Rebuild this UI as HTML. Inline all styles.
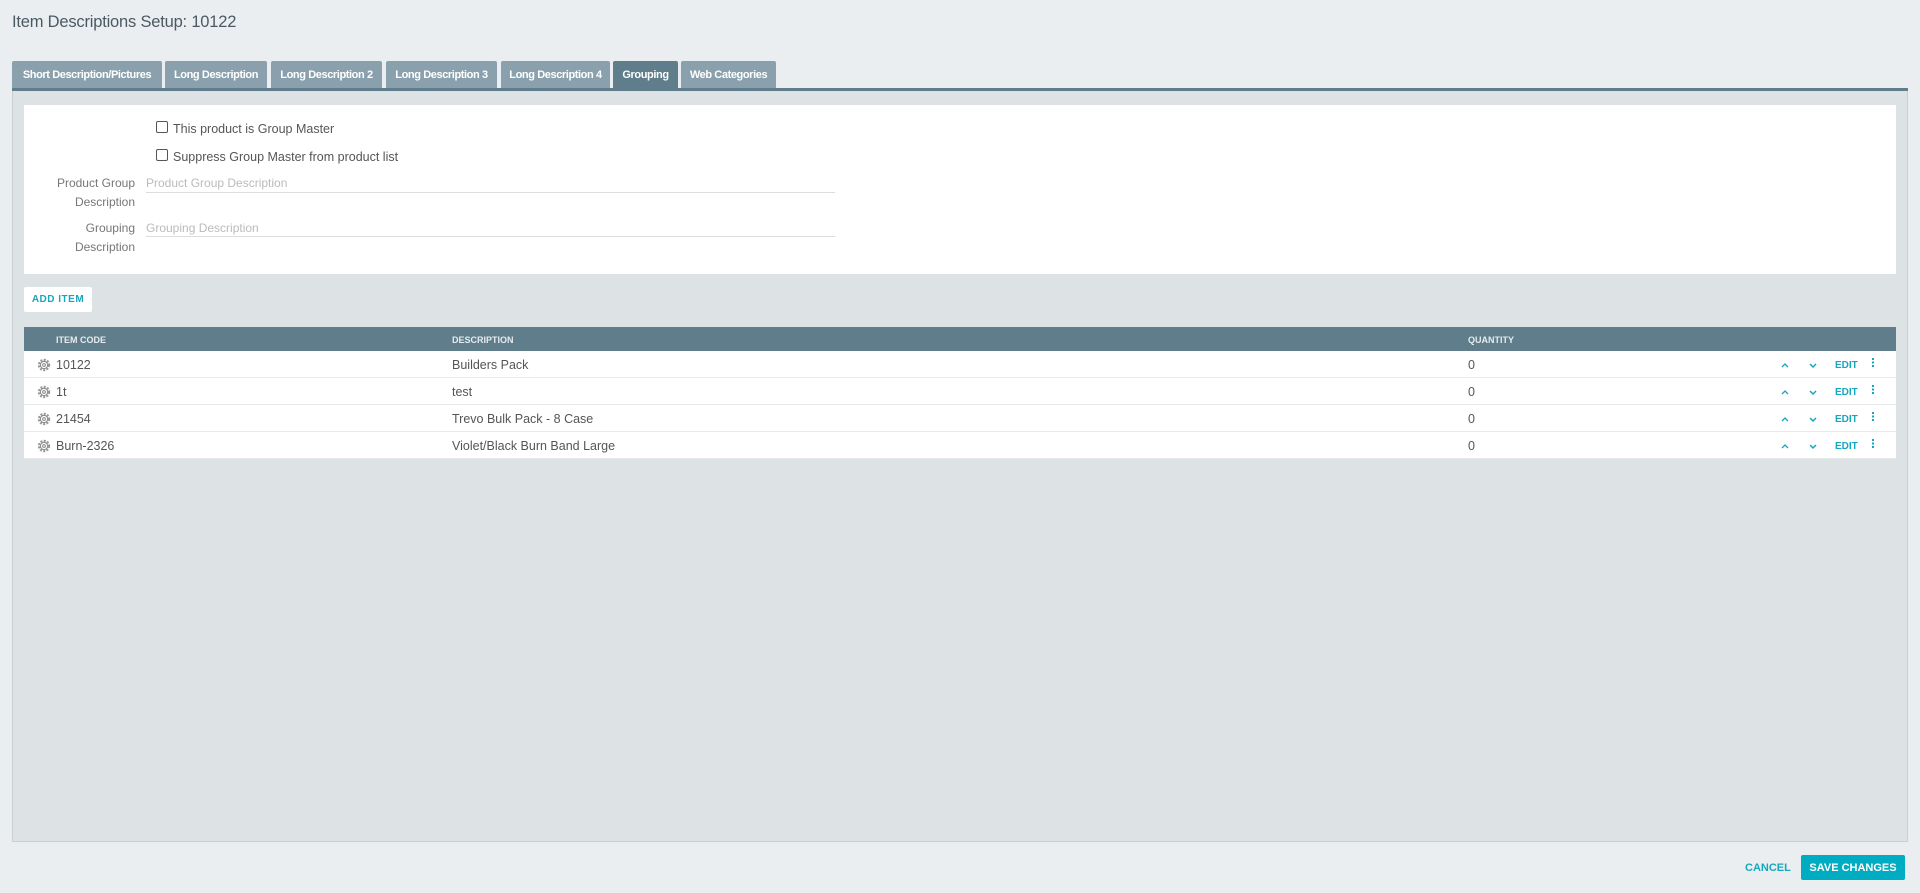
<!DOCTYPE html>
<html><head><meta charset="utf-8"><style>
*{box-sizing:border-box;margin:0;padding:0}
body{width:1920px;height:893px;background:#ebeef1;font-family:"Liberation Sans",sans-serif;color:#555;position:relative;overflow:hidden}
.abs{position:absolute}
h1{position:absolute;left:12px;top:13px;font-size:16.5px;font-weight:normal;color:#4a5a63;letter-spacing:-0.2px}
.tab{position:absolute;top:61px;height:27px;background:#8aa1ad;color:#fff;font-size:11px;font-weight:bold;line-height:28px;text-align:center;letter-spacing:-0.4px;border-radius:2px 2px 0 0}
.tab.act{background:#5f7d8a}
.tabline{left:12px;top:88px;width:1896px;height:3px;background:#5f7d8a}
.panel{left:12px;top:91px;width:1896px;height:751px;background:#dde2e5;border:1px solid #c9cfd3;border-top:none}
.white{left:24px;top:105px;width:1872px;height:169px;background:#fff}
.cb{width:12px;height:12px;border:1px solid #555;border-radius:2px;background:#fff}
.lbl{font-size:12.5px;color:#555}
.flbl{font-size:12px;color:#777;text-align:right;width:120px;line-height:19px}
.inp{border-bottom:1px solid #ddd;font-size:12px;color:#bbb}
.btn{background:#fff;color:#17a6bf;font-weight:bold;font-size:10px;letter-spacing:0.5px;text-align:center;border-radius:2px}
.thead{left:24px;top:327px;width:1872px;height:24px;background:#607d8b;color:#e6ecef;font-size:9px;font-weight:bold}
.thead span{position:absolute;top:8px}
.row{position:absolute;left:24px;width:1872px;height:27px;background:#fff;border-bottom:1px solid #e7e9eb;font-size:12.5px;color:#555}
.row span{position:absolute;top:7px}
.row .c{color:#17a6bf;font-weight:bold;font-size:10px;top:9px}
.row svg{position:absolute}
</style></head><body>
<h1>Item Descriptions Setup: 10122</h1>
<div class="tab" style="left:12px;width:150px">Short Description/Pictures</div>
<div class="tab" style="left:165px;width:102px">Long Description</div>
<div class="tab" style="left:271px;width:111px">Long Description 2</div>
<div class="tab" style="left:386px;width:111px">Long Description 3</div>
<div class="tab" style="left:501px;width:109px">Long Description 4</div>
<div class="tab act" style="left:613px;width:65px">Grouping</div>
<div class="tab" style="left:681px;width:95px">Web Categories</div>
<div class="abs tabline"></div>
<div class="abs panel"></div>
<div class="abs white"></div>
<div class="abs cb" style="left:156px;top:121px"></div>
<div class="abs lbl" style="left:173px;top:122px">This product is Group Master</div>
<div class="abs cb" style="left:156px;top:149px"></div>
<div class="abs lbl" style="left:173px;top:150px">Suppress Group Master from product list</div>
<div class="abs flbl" style="left:15px;top:174px">Product Group<br>Description</div>
<div class="abs inp" style="left:146px;top:176px;width:689px;height:17px">Product Group Description</div>
<div class="abs flbl" style="left:15px;top:219px">Grouping<br>Description</div>
<div class="abs inp" style="left:146px;top:221px;width:689px;height:16px">Grouping Description</div>
<div class="abs btn" style="left:24px;top:287px;width:68px;height:25px;line-height:26px">ADD ITEM</div>
<div class="abs thead"><span style="left:32px">ITEM CODE</span><span style="left:428px">DESCRIPTION</span><span style="left:1444px">QUANTITY</span></div>
<svg width="0" height="0" style="position:absolute"><defs><g id="g"><circle cx="7" cy="7" r="5" fill="none" stroke="#999" stroke-width="2.4" stroke-dasharray="2 1.3"/><circle cx="7" cy="7" r="3.6" fill="#fff" stroke="#888" stroke-width="1"/><circle cx="7" cy="7" r="1.4" fill="none" stroke="#888"/></g>
<g id="u"><path d="M1 5 L4 2 L7 5" fill="none" stroke="#17a6bf" stroke-width="1.3"/></g>
<g id="d"><path d="M1 2 L4 5 L7 2" fill="none" stroke="#17a6bf" stroke-width="1.5"/></g>
<g id="k"><rect x="1" y="0" width="2" height="2" fill="#17a6bf"/><rect x="1" y="3.5" width="2" height="2" fill="#17a6bf"/><rect x="1" y="7" width="2" height="2" fill="#17a6bf"/></g></defs></svg>
<div class="row" style="top:351px"><svg style="left:13px;top:7px" width="14" height="14"><use href="#g"/></svg><span style="left:32px">10122</span><span style="left:428px">Builders Pack</span><span style="left:1444px">0</span><svg style="left:1757px;top:11px" width="8" height="7"><use href="#u"/></svg><svg style="left:1785px;top:11px" width="8" height="7"><use href="#d"/></svg><span class="c" style="left:1811px">EDIT</span><svg style="left:1847px;top:7px" width="4" height="9"><use href="#k"/></svg></div>
<div class="row" style="top:378px"><svg style="left:13px;top:7px" width="14" height="14"><use href="#g"/></svg><span style="left:32px">1t</span><span style="left:428px">test</span><span style="left:1444px">0</span><svg style="left:1757px;top:11px" width="8" height="7"><use href="#u"/></svg><svg style="left:1785px;top:11px" width="8" height="7"><use href="#d"/></svg><span class="c" style="left:1811px">EDIT</span><svg style="left:1847px;top:7px" width="4" height="9"><use href="#k"/></svg></div>
<div class="row" style="top:405px"><svg style="left:13px;top:7px" width="14" height="14"><use href="#g"/></svg><span style="left:32px">21454</span><span style="left:428px">Trevo Bulk Pack - 8 Case</span><span style="left:1444px">0</span><svg style="left:1757px;top:11px" width="8" height="7"><use href="#u"/></svg><svg style="left:1785px;top:11px" width="8" height="7"><use href="#d"/></svg><span class="c" style="left:1811px">EDIT</span><svg style="left:1847px;top:7px" width="4" height="9"><use href="#k"/></svg></div>
<div class="row" style="top:432px"><svg style="left:13px;top:7px" width="14" height="14"><use href="#g"/></svg><span style="left:32px">Burn-2326</span><span style="left:428px">Violet/Black Burn Band Large</span><span style="left:1444px">0</span><svg style="left:1757px;top:11px" width="8" height="7"><use href="#u"/></svg><svg style="left:1785px;top:11px" width="8" height="7"><use href="#d"/></svg><span class="c" style="left:1811px">EDIT</span><svg style="left:1847px;top:7px" width="4" height="9"><use href="#k"/></svg></div>
<div class="abs" style="left:1745px;top:862px;font-size:11px;font-weight:bold;color:#17a6bf">CANCEL</div>
<div class="abs" style="left:1801px;top:855px;width:104px;height:25px;background:#00acc1;color:#fff;font-size:11px;font-weight:bold;line-height:26px;text-align:center;border-radius:2px">SAVE CHANGES</div>
</body></html>
